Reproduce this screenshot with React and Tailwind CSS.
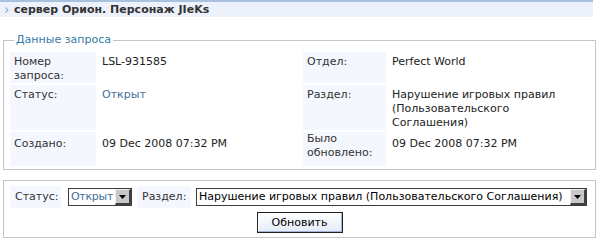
import React from "react";

function Arrow() {
  return (
    <span className="flex h-[16px] w-[16px] shrink-0 items-center justify-center border-l border-t border-r-2 border-b-2 border-l-[#f0f0f0] border-t-[#f0f0f0] border-r-[#404040] border-b-[#404040] bg-[#c8c8c8]">
      <svg width="7" height="4" viewBox="0 0 7 4">
        <polygon points="0,0 7,0 3.5,4" fill="#000" />
      </svg>
    </span>
  );
}

function FakeSelect({ value, width, valueClass }) {
  return (
    <div className={`flex h-[18px] items-center border border-[#3c3c3c] bg-white ${width}`}>
      <span className={`flex-1 overflow-hidden whitespace-nowrap pl-[2px] leading-[16px] ${valueClass}`}>{value}</span>
      <Arrow />
    </div>
  );
}

function Cell({ label, children, labelPad = "pt-[3px]", valuePad = "pt-[3px]" }) {
  return (
    <>
      <div className={`bg-[#f4f7fd] px-[4px] text-[#333] ${labelPad}`}>{label}</div>
      <div className={`px-[4px] ${valuePad}`}>{children}</div>
    </>
  );
}

export default function App() {
  return (
    <div className="h-[243px] w-[599px] bg-white font-['DejaVu_Sans',Verdana,sans-serif] text-[11px] leading-[14px] text-[#222]">
      {/* Title bar */}
      <div className="mr-[6px] flex h-[17px] items-center gap-[5px] border-t-2 border-[#a9c1df] bg-[#edf1fc] pl-[5px] font-bold text-[#333]">
        <svg width="4" height="6" viewBox="0 0 4 6">
          <polyline points="0.5,0.5 3,3 0.5,5.5" fill="none" stroke="#9fb3c9" strokeWidth="1.2" />
        </svg>
        <span>сервер Орион. Персонаж JIeKs</span>
      </div>

      {/* Request data */}
      <fieldset className="mx-[3px] mt-[16px] border border-[#c4c4c4] pb-[3px] pl-[6px] pr-[5px] pt-[5px]">
        <legend className="ml-[4px] px-[2px] text-[#3579a8]">Данные запроса</legend>
        <div className="grid grid-cols-[86px_203px_83px_1fr] grid-rows-[31px_45px_34px] gap-[2px]">
          <Cell label={<>Номер<br />запроса:</>}>LSL-931585</Cell>
          <Cell label="Отдел:">Perfect World</Cell>

          <Cell label="Статус:">
            <span className="text-[#43709a]">Открыт</span>
          </Cell>
          <Cell label="Раздел:">
            Нарушение игровых правил
            <br />
            (Пользовательского
            <br />
            Соглашения)
          </Cell>

          <Cell label="Создано:" labelPad="pt-[5px]" valuePad="pt-[5px]">
            09 Dec 2008 07:32 PM
          </Cell>
          <Cell label={<>Было<br />обновлено:</>} labelPad="pt-[-2px]" valuePad="pt-[5px]">
            09 Dec 2008 07:32 PM
          </Cell>
        </div>
      </fieldset>

      {/* Update form */}
      <div className="mx-[3px] mt-[10px] flex h-[58px] flex-col border border-[#c4c4c4] px-[6px] pt-[5px]">
        <div className="flex h-[22px] items-center">
          <div className="flex h-[22px] w-[51px] items-center bg-[#f4f7fd] pl-[5px] text-[#333]">Статус:</div>
          <div className="ml-[7px]">
            <FakeSelect value="Открыт" width="w-[64px]" valueClass="text-[#43709a] tracking-[-0.3px]" />
          </div>
          <div className="ml-[5px] flex h-[22px] w-[54px] items-center bg-[#f4f7fd] pl-[5px] text-[#333]">Раздел:</div>
          <div className="ml-[5px]">
            <FakeSelect
              value="Нарушение игровых правил (Пользовательского Соглашения)"
              width="w-[391px]"
              valueClass="text-black"
            />
          </div>
        </div>
        <div className="mt-[4px] flex justify-center">
          <button className="h-[21px] w-[86px] border border-[#222] bg-gradient-to-b from-white to-[#e4ebf7] text-black shadow-[inset_-1px_-1px_0_#9fb4d6,inset_1px_1px_0_#ffffff]">
            Обновить
          </button>
        </div>
      </div>
    </div>
  );
}
